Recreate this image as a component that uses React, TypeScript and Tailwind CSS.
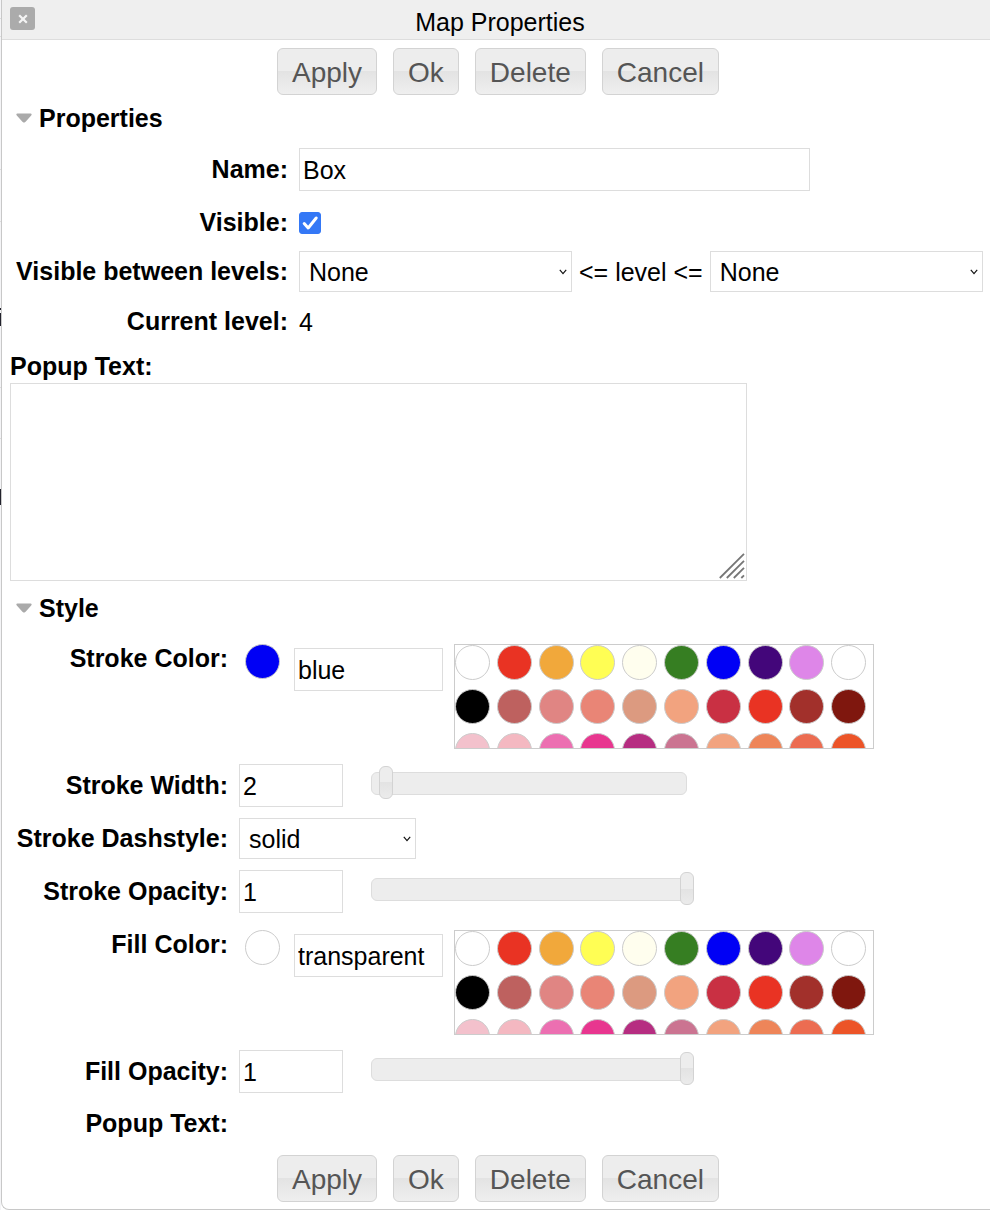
import { useState, type ReactNode } from "react";

type Swatch = { name: string; className: string };

const SWATCHES: Swatch[] = [
  { name: "none", className: "bg-white" },
  { name: "red", className: "bg-[#e93323]" },
  { name: "orange", className: "bg-[#f1a83b]" },
  { name: "yellow", className: "bg-[#fffe54]" },
  { name: "ivory", className: "bg-[#fffeee]" },
  { name: "green", className: "bg-[#367e22]" },
  { name: "blue", className: "bg-[#0000f5]" },
  { name: "indigo", className: "bg-[#43067a]" },
  { name: "violet", className: "bg-[#de86e8]" },
  { name: "white", className: "bg-white" },
  { name: "black", className: "bg-black" },
  { name: "indianred", className: "bg-[#be615f]" },
  { name: "lightcoral", className: "bg-[#e08583]" },
  { name: "salmon", className: "bg-[#e98576]" },
  { name: "darksalmon", className: "bg-[#dc9a80]" },
  { name: "lightsalmon", className: "bg-[#f2a37f]" },
  { name: "crimson", className: "bg-[#c93043]" },
  { name: "bright red", className: "bg-[#e93323]" },
  { name: "firebrick", className: "bg-[#a2302b]" },
  { name: "darkred", className: "bg-[#7f170e]" },
  { name: "pink", className: "bg-[#f3c1cc]" },
  { name: "lightpink", className: "bg-[#f4b8c1]" },
  { name: "hotpink", className: "bg-[#ec6fb1]" },
  { name: "deeppink", className: "bg-[#e8368f]" },
  { name: "mediumvioletred", className: "bg-[#b62d81]" },
  { name: "palevioletred", className: "bg-[#cb7491]" },
  { name: "light salmon", className: "bg-[#f2a37f]" },
  { name: "coral", className: "bg-[#ee8559]" },
  { name: "tomato", className: "bg-[#ec6c51]" },
  { name: "orangered", className: "bg-[#ec5428]" },
];

function ButtonBar() {
  return (
    <div className="flex flex-wrap justify-center gap-4 pl-0.5">
      {["Apply", "Ok", "Delete", "Cancel"].map((label) => (
        <button
          key={label}
          type="button"
          className="h-[47px] rounded-md border border-[#d3d3d3] bg-[linear-gradient(#ededed_50%,#e3e3e3_50%,#efefef)] px-3.5 pt-0.5 text-[28px] leading-8 text-[#555555]"
        >
          {label}
        </button>
      ))}
    </div>
  );
}

function Section({ title, children }: { title: string; children: ReactNode }) {
  const [open, setOpen] = useState(true);
  return (
    <section>
      <h2>
        <button
          type="button"
          aria-expanded={open}
          onClick={() => setOpen(!open)}
          className="flex h-[46px] items-center gap-[7px] pl-1.5 text-[25px] leading-7 font-bold"
        >
          <svg viewBox="0 0 16 10" className="h-2.5 w-4" aria-hidden="true">
            <path
              d="M1.4 0.5H14.6C15.8 0.5 16 1.6 15.2 2.4L9.6 8.8C8.6 9.9 7.4 9.9 6.4 8.8L0.8 2.4C0 1.6 0.2 0.5 1.4 0.5Z"
              fill="#aaaaaa"
            />
          </svg>
          {title}
        </button>
      </h2>
      {open && children}
    </section>
  );
}

function FieldLabel({ id, children }: { id: string; children: ReactNode }) {
  return (
    <label htmlFor={id} className="pb-0.5 text-right text-[25px] leading-7 font-bold">
      {children}
    </label>
  );
}

function TextInput({ id, value, width }: { id: string; value: string; width: string }) {
  return (
    <input
      id={id}
      type="text"
      defaultValue={value}
      className={`h-[43px] min-w-0 border border-[#dddddd] bg-white px-[3px] pt-0.5 text-[25px] leading-7 ${width}`}
    />
  );
}

function Select({ id, label, options, width }: { id: string; label?: string; options: string[]; width: string }) {
  return (
    <span className={`relative flex min-w-0 items-center ${width}`}>
      <select
        id={id}
        aria-label={label}
        className="h-[41px] w-full appearance-none border border-[#dddddd] bg-white pr-6 pl-[9px] text-[25px] leading-7"
      >
        {options.map((option) => (
          <option key={option}>{option}</option>
        ))}
      </select>
      <svg viewBox="0 0 8 6" className="pointer-events-none absolute right-[5px] h-1.5 w-2" aria-hidden="true">
        <path d="M0.8 0.9L4 4.6L7.2 0.9" fill="none" stroke="#111111" strokeWidth="1.2" />
      </svg>
    </span>
  );
}

function Slider({ label, max, step, value }: { label: string; max: number; step: number; value: number }) {
  return (
    <div className="mb-[5px] ml-7 flex h-[23px] w-[316px] items-center rounded-md border border-[#dddddd] bg-[#ededed]">
      <input
        type="range"
        aria-label={label}
        min={0}
        max={max}
        step={step}
        defaultValue={value}
        className="-mx-2 mb-0.5 h-[33px] w-[330px] flex-none appearance-none bg-transparent [&::-webkit-slider-thumb]:h-[33px] [&::-webkit-slider-thumb]:w-3.5 [&::-webkit-slider-thumb]:appearance-none [&::-webkit-slider-thumb]:rounded-md [&::-webkit-slider-thumb]:border [&::-webkit-slider-thumb]:border-[#d3d3d3] [&::-webkit-slider-thumb]:bg-[linear-gradient(#ededed_50%,#e3e3e3_50%,#ebebeb)]"
      />
    </div>
  );
}

function SizeRow({ id, label, value, max, step }: { id: string; label: string; value: number; max: number; step: number }) {
  return (
    <div className="grid grid-cols-[218px_1fr] items-center gap-[11px]">
      <FieldLabel id={id}>{label}</FieldLabel>
      <div className="flex items-center">
        <TextInput id={id} value={String(value)} width="w-[104px]" />
        <Slider label={`${label} slider`} max={max} step={step} value={value} />
      </div>
    </div>
  );
}

function ColorRow({ id, label, value, dot }: { id: string; label: string; value: string; dot: string }) {
  return (
    <div className="grid grid-cols-[218px_1fr] items-start gap-[11px] pt-1.5 pb-1">
      <FieldLabel id={id}>{label}</FieldLabel>
      <div className="flex items-start">
        <span className={`ml-1.5 size-[35px] flex-none rounded-full border border-[#cccccc] ${dot}`} />
        <span className="mt-1 ml-3.5 flex">
          <TextInput id={id} value={value} width="w-[149px]" />
        </span>
        <div className="ml-[11px] grid h-[105px] w-[420px] auto-rows-[44px] grid-cols-10 overflow-hidden border border-[#cccccc]">
          {SWATCHES.map((swatch) => (
            <button
              key={swatch.name}
              type="button"
              aria-label={swatch.name}
              className={`size-[35px] rounded-full border border-[#cccccc] ${swatch.className}`}
            />
          ))}
        </div>
      </div>
    </div>
  );
}

function PageEdge() {
  return (
    <svg viewBox="0 0 1 1210" preserveAspectRatio="none" className="w-px flex-none bg-[#f4f4f6]" aria-hidden="true">
      <path d="M0 18.5H1M0 36.5H1M0 169.5H1M0 221.5H1M0 387.5H1M0 438.5H1" stroke="#dddddd" />
      <path d="M0 308H1V310H0ZM0 313H1V326H0ZM0 489H1V505H0Z" fill="#22222c" />
    </svg>
  );
}

export default function App() {
  return (
    <div className="flex bg-white font-['Liberation_Sans',Arial,sans-serif] text-black">
      <PageEdge />
      <main className="min-w-0 flex-1 rounded-bl-lg border-b border-l border-[#c8c8c8] pb-[7px]">
        <header className="relative flex h-10 items-center justify-center border-b border-[#dddddd] bg-[#efefef] pt-1 pl-2">
          <button
            type="button"
            aria-label="Close"
            className="absolute top-[7px] left-2 flex h-[23px] w-[25px] items-center justify-center rounded-[3px] bg-[#ababab]"
          >
            <svg viewBox="0 0 10 10" className="size-2.5" aria-hidden="true">
              <path d="M1.2 1.2L8.8 8.8M8.8 1.2L1.2 8.8" stroke="#f4f4f4" strokeWidth="2.2" />
            </svg>
          </button>
          <h1 className="text-[25px] leading-7">Map Properties</h1>
        </header>

        <form className="pt-2 pr-1.5 pl-2" onSubmit={(event) => event.preventDefault()}>
          <ButtonBar />

          <Section title="Properties">
            <div className="flex flex-col gap-2.5 pt-[7px]">
              <div className="grid grid-cols-[278px_1fr] items-center gap-[11px]">
                <FieldLabel id="name">Name:</FieldLabel>
                <TextInput id="name" value="Box" width="w-[511px]" />
              </div>
              <div className="grid h-10 grid-cols-[278px_1fr] items-center gap-[11px] pt-1">
                <FieldLabel id="visible">Visible:</FieldLabel>
                <span className="relative flex size-[22px]">
                  <input
                    id="visible"
                    type="checkbox"
                    defaultChecked
                    className="peer size-[22px] appearance-none rounded-[3px] border border-[#aaaaaa] checked:border-[#3478f6] checked:bg-[#3478f6]"
                  />
                  <svg
                    viewBox="0 0 22 22"
                    className="pointer-events-none absolute inset-0 hidden size-[22px] peer-checked:block"
                    aria-hidden="true"
                  >
                    <path
                      d="M5.2 11.6L9.2 16L17.2 6"
                      fill="none"
                      stroke="#ffffff"
                      strokeWidth="3"
                      strokeLinecap="round"
                      strokeLinejoin="round"
                    />
                  </svg>
                </span>
              </div>
              <div className="grid grid-cols-[278px_1fr] items-center gap-[11px]">
                <FieldLabel id="min-level">Visible between levels:</FieldLabel>
                <div className="flex items-center gap-[7px]">
                  <Select id="min-level" options={["None"]} width="w-[273px]" />
                  <span className="text-[25px] leading-7 whitespace-nowrap">&lt;= level &lt;=</span>
                  <Select id="max-level" label="Maximum level" options={["None"]} width="w-[273px]" />
                </div>
              </div>
              <div className="grid h-10 grid-cols-[278px_1fr] items-center gap-[11px]">
                <FieldLabel id="current-level">Current level:</FieldLabel>
                <output id="current-level" className="text-[25px] leading-7">
                  4
                </output>
              </div>
              <div className="flex flex-col items-start">
                <label htmlFor="popup-text" className="pb-[3px] text-[25px] leading-7 font-bold">
                  Popup Text:
                </label>
                <div className="relative flex w-[737px] max-w-full">
                  <textarea id="popup-text" className="h-[198px] w-full resize-none border border-[#dddddd] p-0.5 text-[25px]" />
                  <svg
                    viewBox="0 0 26 26"
                    className="pointer-events-none absolute right-0.5 bottom-0.5 size-[26px]"
                    aria-hidden="true"
                  >
                    <path
                      d="M0.8 25L25 0.8M7.8 25L25 7.8M14.8 25L25 14.8M22.3 25L25 22.3"
                      stroke="#777777"
                      strokeWidth="1.8"
                    />
                  </svg>
                </div>
              </div>
            </div>
          </Section>

          <div className="pt-1">
            <Section title="Style">
              <div className="flex flex-col gap-[11px] pt-[7px]">
                <ColorRow id="stroke-color" label="Stroke Color:" value="blue" dot="bg-[#0000f5]" />
                <SizeRow id="stroke-width" label="Stroke Width:" value={2} max={43} step={1} />
                <div className="grid grid-cols-[218px_1fr] items-center gap-[11px]">
                  <FieldLabel id="dashstyle">Stroke Dashstyle:</FieldLabel>
                  <Select id="dashstyle" options={["solid", "dot", "dash", "dashdot", "longdash"]} width="w-[177px]" />
                </div>
                <SizeRow id="stroke-opacity" label="Stroke Opacity:" value={1} max={1} step={0.1} />
                <ColorRow id="fill-color" label="Fill Color:" value="transparent" dot="bg-white" />
                <SizeRow id="fill-opacity" label="Fill Opacity:" value={1} max={1} step={0.1} />
                <div className="grid h-10 grid-cols-[218px_1fr] items-center gap-[11px]">
                  <span className="pb-0.5 text-right text-[25px] leading-7 font-bold">Popup Text:</span>
                </div>
              </div>
            </Section>
          </div>

          <div className="pt-[11px]">
            <ButtonBar />
          </div>
        </form>
      </main>
    </div>
  );
}
